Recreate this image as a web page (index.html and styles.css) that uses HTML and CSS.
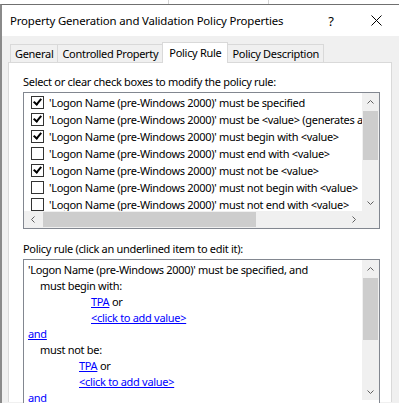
FILE: index.html
```html
<!DOCTYPE html>
<html lang="en">
<head>
    <meta charset="UTF-8">
    <title>Property Generation and Validation Policy Properties</title>
    <link rel="stylesheet" href="styles.css">
</head>
<body>
    <div class="desktop"><span class="seam seam-a"></span><span class="seam seam-b"></span></div>
    <div class="window">
        <div class="titlebar">
            <span class="title">Property Generation and Validation Policy Properties</span>
            <span class="title-btn help">?</span>
            <span class="title-btn close">
                <svg width="11" height="11" viewBox="0 0 11 11"><path d="M0.5 0.5 L10.5 10.5 M10.5 0.5 L0.5 10.5" stroke="#000" stroke-width="1"/></svg>
            </span>
        </div>
        <div class="dialog">
            <div class="tabs">
                <div class="tab">General</div>
                <div class="tab">Controlled Property</div>
                <div class="tab active">Policy Rule</div>
                <div class="tab">Policy Description</div>
            </div>
            <div class="panel">
                <div class="label">Select or clear check boxes to modify the policy rule:</div>
                <div class="listbox rules">
                    <div class="list-body">
                        <div class="rows">
                            <div class="row"><span class="check on"></span>'Logon Name (pre-Windows 2000)' must be specified</div>
                            <div class="row"><span class="check on"></span>'Logon Name (pre-Windows 2000)' must be &lt;value&gt; (generates an error if &lt;value&gt; is not specified)</div>
                            <div class="row"><span class="check on"></span>'Logon Name (pre-Windows 2000)' must begin with &lt;value&gt;</div>
                            <div class="row"><span class="check"></span>'Logon Name (pre-Windows 2000)' must end with &lt;value&gt;</div>
                            <div class="row"><span class="check on"></span>'Logon Name (pre-Windows 2000)' must not be &lt;value&gt;</div>
                            <div class="row"><span class="check"></span>'Logon Name (pre-Windows 2000)' must not begin with &lt;value&gt;</div>
                            <div class="row"><span class="check"></span>'Logon Name (pre-Windows 2000)' must not end with &lt;value&gt;</div>
                        </div>
                        <div class="vscroll">
                            <span class="arrow"><svg width="7" height="4" viewBox="0 0 7 4"><path d="M0.5 3.5 L3.5 0.5 L6.5 3.5" fill="none" stroke="#606060"/></svg></span>
                            <div class="track"><div class="thumb thumb-a"></div></div>
                            <span class="arrow"><svg width="7" height="4" viewBox="0 0 7 4"><path d="M0.5 0.5 L3.5 3.5 L6.5 0.5" fill="none" stroke="#606060"/></svg></span>
                        </div>
                    </div>
                    <div class="hscroll">
                        <span class="arrow"><svg width="4" height="7" viewBox="0 0 4 7"><path d="M3.5 0.5 L0.5 3.5 L3.5 6.5" fill="none" stroke="#606060"/></svg></span>
                        <div class="htrack"><div class="hthumb"></div></div>
                        <span class="arrow"><svg width="4" height="7" viewBox="0 0 4 7"><path d="M0.5 0.5 L3.5 3.5 L0.5 6.5" fill="none" stroke="#606060"/></svg></span>
                        <span class="corner"></span>
                    </div>
                </div>
                <div class="label second">Policy rule (click an underlined item to edit it):</div>
                <div class="listbox rule-text">
                    <div class="text-body">
                        <div class="line">'Logon Name (pre-Windows 2000)' must be specified, and</div>
                        <div class="line ind1">must begin with:</div>
                        <div class="line ind2"><a class="link">TPA</a> or</div>
                        <div class="line ind2"><a class="link">&lt;click to add value&gt;</a></div>
                        <div class="line"><a class="link">and</a></div>
                        <div class="line ind1">must not be:</div>
                        <div class="line ind3"><a class="link">TPA</a> or</div>
                        <div class="line ind3"><a class="link">&lt;click to add value&gt;</a></div>
                        <div class="line"><a class="link">and</a></div>
                    </div>
                    <div class="vscroll tall">
                        <span class="arrow"><svg width="7" height="4" viewBox="0 0 7 4"><path d="M0.5 3.5 L3.5 0.5 L6.5 3.5" fill="none" stroke="#606060"/></svg></span>
                        <div class="track"><div class="thumb thumb-b"></div></div>
                        <span class="arrow"><svg width="7" height="4" viewBox="0 0 7 4"><path d="M0.5 0.5 L3.5 3.5 L6.5 0.5" fill="none" stroke="#606060"/></svg></span>
                    </div>
                </div>
            </div>
        </div>
    </div>
</body>
</html>
```

FILE: styles.css
```css
html, body {
    margin: 0;
    padding: 0;
    height: 403px;
    overflow: hidden;
}
body {
    font-family: "Noto Sans", "Open Sans", sans-serif;
    font-size: 11px;
    letter-spacing: -0.3px;
    color: #000;
    background: #fff;
}
.desktop {
    height: 4px;
    position: relative;
    background: #fff;
}
.seam {
    position: absolute;
    top: 0;
    width: 1px;
    height: 4px;
    background: #d4d4d4;
}
.seam-a { left: 168px; }
.seam-b { left: 268px; }
.window {
    border-top: 1px solid #707070;
    border-left: 2px solid #8a8a8a;
    height: 398px;
    overflow: hidden;
    display: flex;
    flex-direction: column;
}
.titlebar {
    flex: none;
    height: 31px;
    background: #fff;
    display: flex;
    align-items: center;
    padding-left: 8px;
}
.title {
    flex: 1;
    font-size: 11.4px;
    letter-spacing: -0.15px;
    white-space: nowrap;
    overflow: hidden;
}
.title-btn {
    width: 46px;
    text-align: center;
    font-size: 13px;
}
.close {
    display: flex;
    justify-content: center;
    width: 45px;
}
.dialog {
    flex: 1;
    background: #f0f0f0;
    padding: 6px 6px 0 6px;
    display: flex;
    flex-direction: column;
}
.tabs {
    flex: none;
    display: flex;
    align-items: flex-end;
    height: 20px;
    padding-left: 2px;
}
.tab {
    height: 17px;
    line-height: 17px;
    padding: 0 4px;
    border: 1px solid #d9d9d9;
    border-bottom: none;
    background: #f0f0f0;
    margin-right: -1px;
    white-space: nowrap;
}
.tab.active {
    height: 20px;
    line-height: 19px;
    background: #fff;
    position: relative;
    z-index: 1;
    margin-bottom: -1px;
    padding: 0 6px;
}
.panel {
    flex: none;
    height: 340px;
    background: #fff;
    border: 1px solid #d9d9d9;
    border-bottom: none;
    width: 384px;
    padding: 11px 0 0 14px;
    box-sizing: border-box;
}
.label {
    height: 18px;
    line-height: 15px;
    white-space: nowrap;
}
.label.second {
    margin-top: 12px;
    height: 18px;
}
.listbox {
    border: 1px solid #828790;
    width: 357px;
    box-sizing: border-box;
    background: #fff;
}
.list-body {
    display: flex;
    height: 118px;
}
.rows {
    flex: 1;
    overflow: hidden;
    padding-top: 1px;
}
.row {
    height: 17px;
    line-height: 17px;
    display: flex;
    align-items: center;
    white-space: nowrap;
    padding-left: 7px;
}
.check {
    width: 11px;
    height: 11px;
    border: 1px solid #333;
    margin-right: 5px;
    flex: none;
    position: relative;
    background: #fff;
}
.check.on::after {
    content: "";
    position: absolute;
    left: 3px;
    top: 0px;
    width: 3px;
    height: 6px;
    border: solid #000;
    border-width: 0 2px 2px 0;
    transform: rotate(40deg);
}
.vscroll {
    width: 17px;
    background: #f0f0f0;
    display: flex;
    flex-direction: column;
    flex: none;
}
.arrow {
    height: 17px;
    width: 17px;
    display: flex;
    align-items: center;
    justify-content: center;
    flex: none;
}
.track {
    flex: 1;
    padding: 1px 0;
}
.thumb {
    background: #cdcdcd;
    margin: 0 1px;
}
.thumb-a { height: 49px; }
.thumb-b { height: 62px; }
.hscroll {
    display: flex;
    height: 17px;
    background: #f0f0f0;
}
.htrack {
    flex: 1;
    padding: 1px 0;
}
.hthumb {
    width: 213px;
    height: 15px;
    margin-left: 2px;
    background: #cdcdcd;
}
.corner {
    width: 17px;
    background: #f0f0f0;
}
.rule-text {
    display: flex;
    height: 160px;
}
.text-body {
    flex: 1;
    padding: 2px 0 0 4px;
    overflow: hidden;
}
.line {
    height: 16px;
    line-height: 16px;
    white-space: nowrap;
}
.ind1 { padding-left: 12px; }
.ind2 { padding-left: 63px; }
.ind3 { padding-left: 51px; }
.link {
    color: #0000ff;
    text-decoration: underline;
}
.vscroll.tall {
    height: 140px;
}
```
